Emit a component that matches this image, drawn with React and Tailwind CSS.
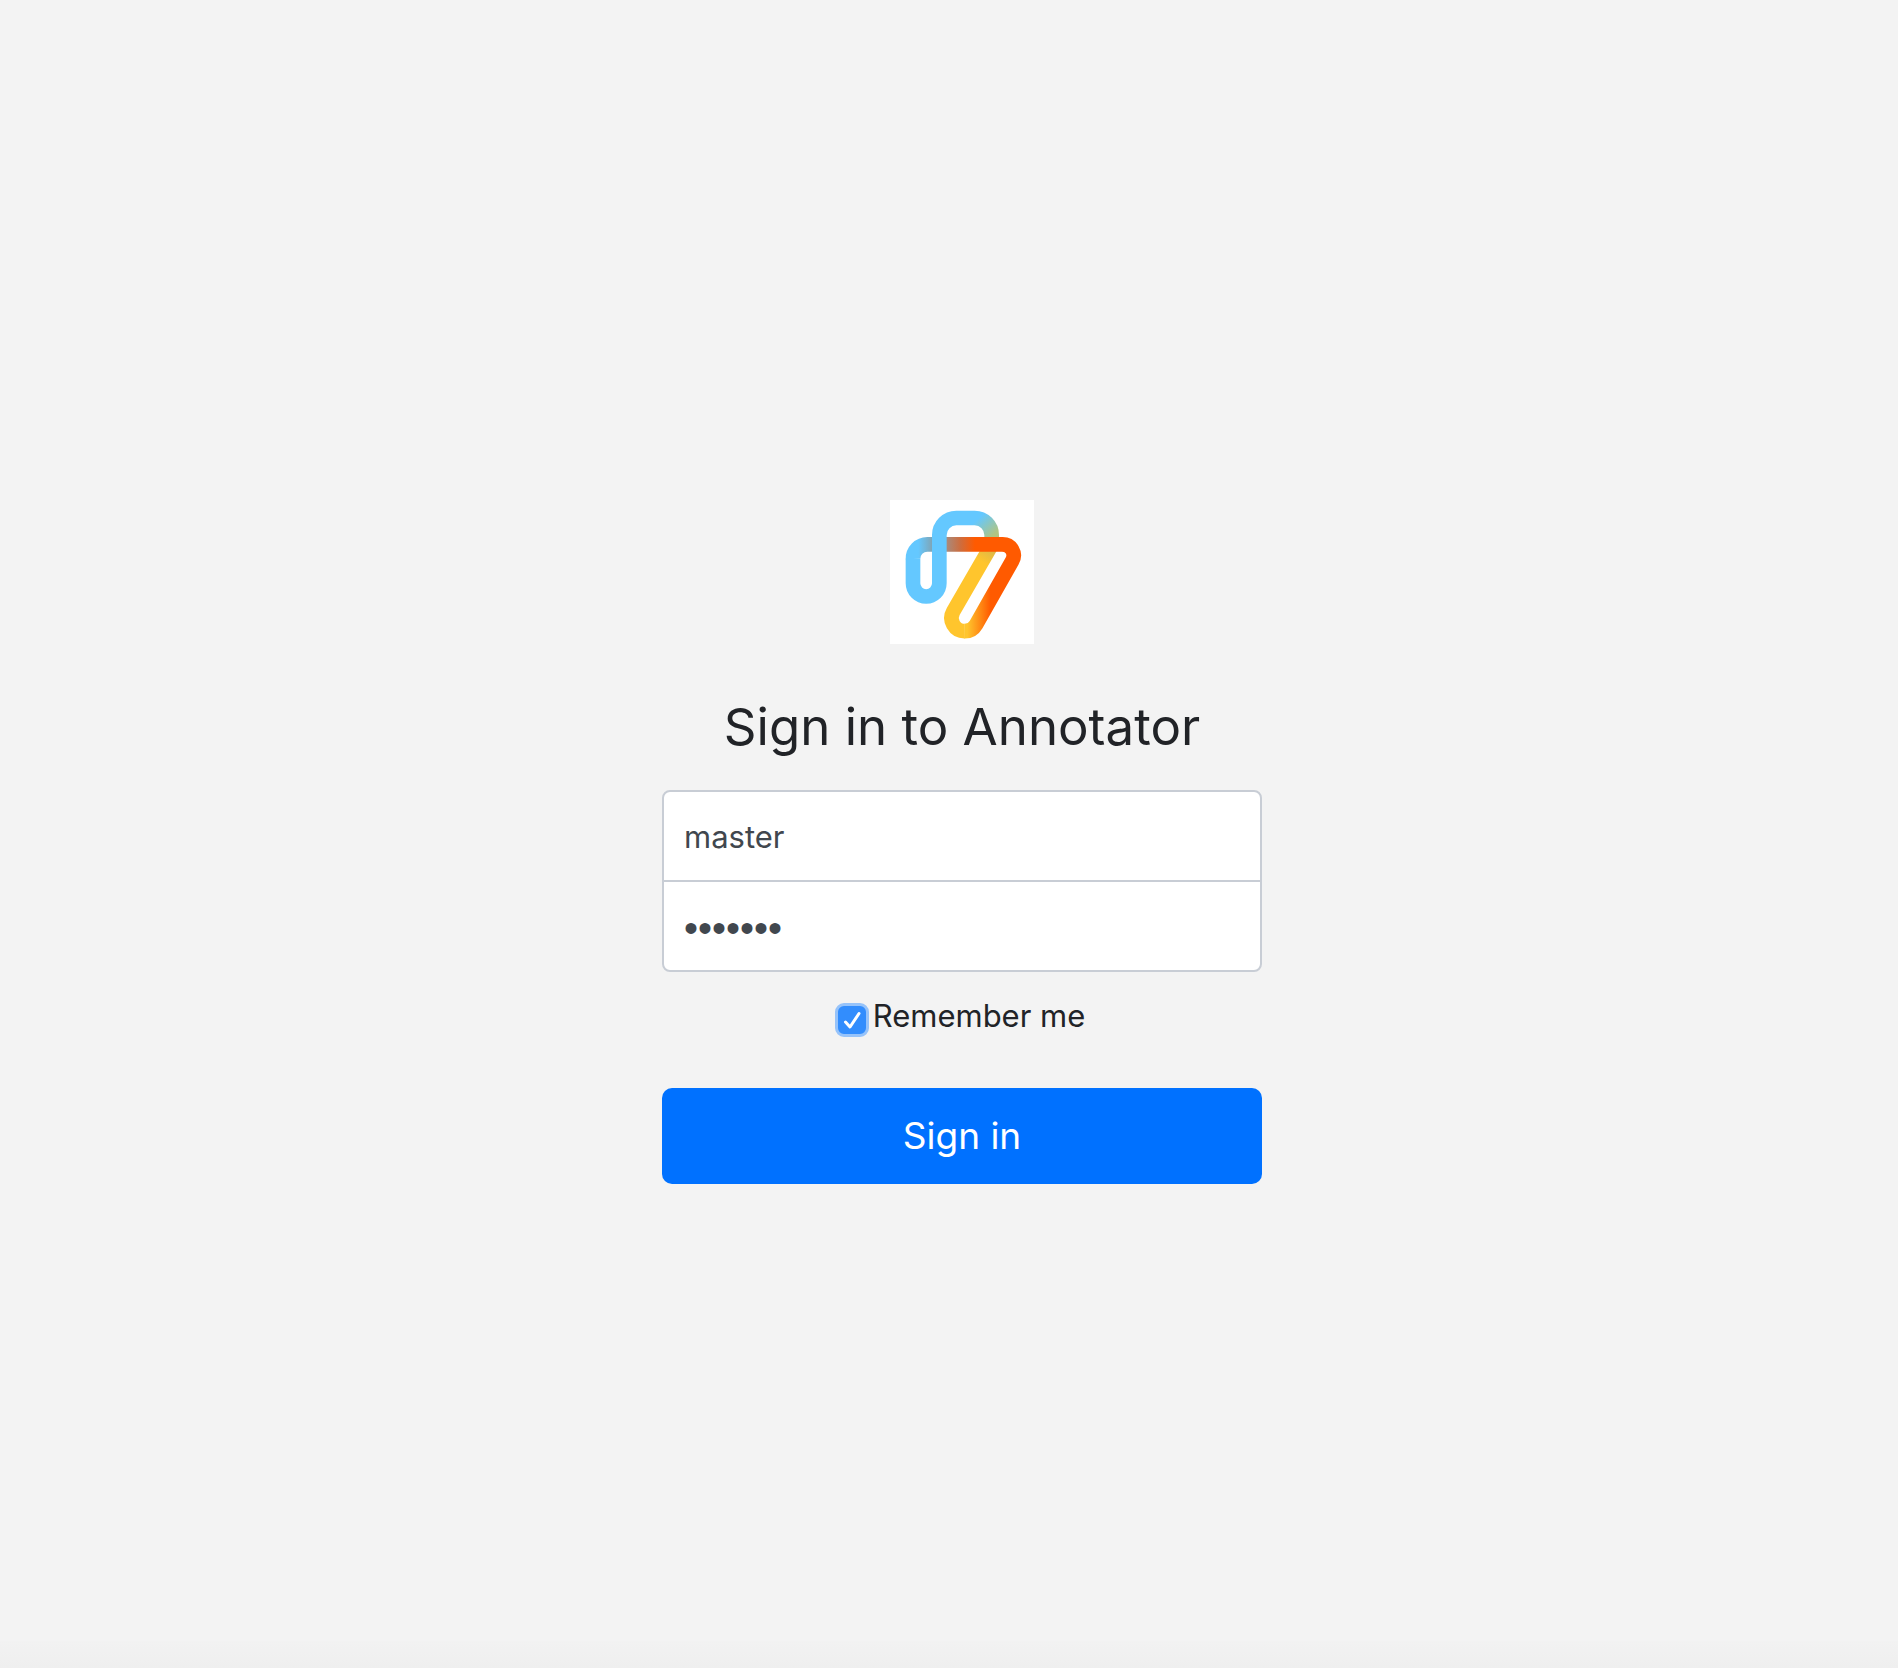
import React from "react";

function Logo() {
  return (
    <svg className="size-36 bg-white" viewBox="30 30 432 432" fill="none" strokeWidth="44" role="img" aria-label="Annotator logo">
      <defs>
        <linearGradient id="bar" gradientUnits="userSpaceOnUse" x1="115" y1="0" x2="285" y2="0">
          <stop offset="0" stopColor="#64c8ff" />
          <stop offset="0.25" stopColor="#80a4b4" />
          <stop offset="0.5" stopColor="#a98a7c" />
          <stop offset="0.75" stopColor="#cf6c3c" />
          <stop offset="1" stopColor="#ff5a00" />
        </linearGradient>
        <linearGradient id="arch" gradientUnits="userSpaceOnUse" x1="290" y1="90" x2="335" y2="140">
          <stop offset="0" stopColor="#64c8ff" />
          <stop offset="1" stopColor="#b0c583" />
        </linearGradient>
        <linearGradient id="yellow" gradientUnits="userSpaceOnUse" x1="330" y1="175" x2="305" y2="215">
          <stop offset="0" stopColor="#dcb84a" />
          <stop offset="1" stopColor="#ffc52d" />
        </linearGradient>
        <linearGradient id="orange" gradientUnits="userSpaceOnUse" x1="262" y1="395" x2="332" y2="395">
          <stop offset="0" stopColor="#ffc52d" />
          <stop offset="1" stopColor="#ff5a00" />
        </linearGradient>
      </defs>
      <path d="M336 163 L219.8 364.3 A39.5 39.5 0 0 0 254 423.5" stroke="url(#yellow)" />
      <path d="M178 135 A51 51 0 0 1 229 84 H284 A51 51 0 0 1 335 135 V150" stroke="url(#arch)" />
      <path d="M368 163 A33 33 0 0 1 396.6 212.5 L288.2 403.7 A39.5 39.5 0 0 1 253 423.5" stroke="url(#orange)" />
      <path d="M99 207 A43 43 0 0 1 142 163 H369" stroke="url(#bar)" />
      <path d="M99 206 V280 A39.5 39.5 0 0 0 178 280 V134" stroke="#64c8ff" />
    </svg>
  );
}

export default function App() {
  const field =
    "relative block h-[92px] w-full border-2 border-[#c8cdd5] bg-white px-5 text-[#41474e] outline-none";
  return (
    <main className="flex min-h-screen flex-col bg-[#f3f3f3] font-['Inter','Liberation_Sans',sans-serif] text-[#212327]">
      <div className="flex flex-1 items-center justify-center pt-[43px] pl-[26px]">
        <form className="flex w-full max-w-[600px] flex-col items-center" onSubmit={(e) => e.preventDefault()}>
          <Logo />
          <h1 className="mt-12 text-[51px] leading-[70px]">Sign in to Annotator</h1>
          <div className="mt-7 w-full">
            <input className={field + " rounded-t-lg text-[31px]"} type="text" aria-label="Username" defaultValue="master" />
            <input
              className={field + " -mt-0.5 rounded-b-lg pt-1 font-['Liberation_Sans',sans-serif] text-[40px]"}
              type="password"
              aria-label="Password"
              defaultValue="1234567"
            />
          </div>
          <label className="mt-5 flex h-12 items-center gap-1 pr-1 text-[31px]">
            <span className="relative mt-2 block size-[34px]">
              <input
                type="checkbox"
                defaultChecked
                className="peer block size-[34px] appearance-none rounded-[9px] border-3 border-[#96c3fa] bg-white checked:bg-[#328dfd]"
              />
              <svg className="pointer-events-none absolute inset-0 hidden peer-checked:block" viewBox="0 0 34 34" fill="none" stroke="white" strokeWidth="3" strokeLinecap="round" strokeLinejoin="round" aria-hidden="true">
                <path d="M10.5 19 L15 24 L24 10.5" />
              </svg>
            </span>
            Remember me
          </label>
          <button type="submit" className="mt-12 h-24 w-full rounded-[10px] bg-[#0071ff] text-[37px] text-white">
            Sign in
          </button>
        </form>
      </div>
      <div className="h-[27px] bg-linear-to-b from-[#f2f2f2] to-[#efefef]" />
    </main>
  );
}
